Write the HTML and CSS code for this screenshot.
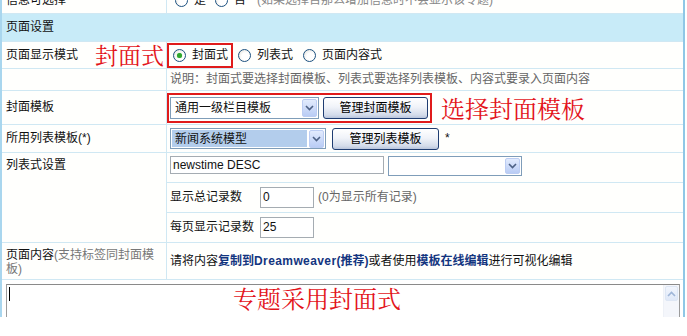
FILE: index.html
```html
<!DOCTYPE html>
<html lang="zh-CN">
<head>
<meta charset="utf-8">
<title>专题设置</title>
<link rel="stylesheet" href="styles.css">
</head>
<body>
<div class="frame">
  <div class="rows">
    <div class="row r0">
      <div class="lbl">信息可选择</div>
      <div class="val pad">
        <span class="radio"></span><span class="opt">是</span>
        <span class="radio"></span><span class="opt">否</span>
        <span class="hint">(如果选择否那么增加信息时不会显示该专题)</span>
      </div>
    </div>
    <div class="head">页面设置</div>
    <div class="row r-mode">
      <div class="lbl lbl-split"><span>页面显示模式</span><span class="anno">封面式</span></div>
      <div class="val">
        <span class="redbox rb-mode"><span class="radio on"></span><span class="opt">封面式</span></span>
        <span class="radio"></span><span class="opt">列表式</span>
        <span class="radio"></span><span class="opt">页面内容式</span>
      </div>
    </div>
    <div class="row r-note">
      <div class="lbl"></div>
      <div class="val pad note">说明：封面式要选择封面模板、列表式要选择列表模板、内容式要录入页面内容</div>
    </div>
    <div class="row r-cover">
      <div class="lbl">封面模板</div>
      <div class="val">
        <span class="redbox rb-cover">
          <span class="sel sel-cover"><span class="txt">通用一级栏目模板</span><span class="arr"><svg width="9" height="6" viewBox="0 0 9 6"><path d="M1 1 L4.5 4.5 L8 1" fill="none" stroke="#4d6185" stroke-width="1.6"/></svg></span></span>
          <span class="btn btn-cover">管理封面模板</span>
        </span>
        <span class="anno anno-cover">选择封面模板</span>
      </div>
    </div>
    <div class="row r-list">
      <div class="lbl">所用列表模板(*)</div>
      <div class="val pad">
        <span class="sel sel-list"><span class="txt hl">新闻系统模型</span><span class="arr"><svg width="9" height="6" viewBox="0 0 9 6"><path d="M1 1 L4.5 4.5 L8 1" fill="none" stroke="#4d6185" stroke-width="1.6"/></svg></span></span>
        <span class="btn btn-list">管理列表模板</span>
        <span class="star">*</span>
      </div>
    </div>
    <div class="row r-set">
      <div class="lbl lbl-top">列表式设置</div>
      <div class="sub">
        <div class="subrow s1">
          <span class="inp inp-order">newstime DESC</span>
          <span class="sel sel-order"><span class="txt"></span><span class="arr"><svg width="9" height="6" viewBox="0 0 9 6"><path d="M1 1 L4.5 4.5 L8 1" fill="none" stroke="#4d6185" stroke-width="1.6"/></svg></span></span>
        </div>
        <div class="subrow s2">
          <span class="sublbl">显示总记录数</span>
          <span class="inp inp-num">0</span>
          <span class="hint2">(0为显示所有记录)</span>
        </div>
        <div class="subrow s3">
          <span class="sublbl">每页显示记录数</span>
          <span class="inp inp-num">25</span>
        </div>
      </div>
    </div>
    <div class="row r-content">
      <div class="lbl lbl-wrap">页面内容<span class="grey">(支持标签同封面模板)</span></div>
      <div class="val pad">请将内容<b class="em">复制到<span class="lat">Dreamweaver</span>(推荐)</b>或者使用<b class="em">模板在线编辑</b>进行可视化编辑</div>
    </div>
    <div class="ta-wrap">
      <div class="ta">
        <span class="caret"></span>
        <span class="anno anno-ta">专题采用封面式</span>
        <div class="sb"><span class="sb-up"><svg width="9" height="6" viewBox="0 0 9 6"><path d="M1 5 L4.5 1.5 L8 5" fill="none" stroke="#9fb6d8" stroke-width="1.6"/></svg></span></div>
      </div>
    </div>
  </div>
</div>
</body>
</html>
```
FILE: styles.css
```css
* { box-sizing: border-box; }
body {
  margin: 0;
  background: #fff;
  font-family: "Liberation Sans", "Noto Sans CJK SC", sans-serif;
  font-size: 12px;
  line-height: 1.2;
  color: #111;
}
.frame {
  width: 685px;
  height: 317px;
  overflow: hidden;
  border-left: 2px solid #a9d6ee;
  border-right: 2px solid #8fc7e6;
}
.rows { margin-top: -13px; }
.row {
  display: grid;
  grid-template-columns: 165px 1fr;
  border-bottom: 1px solid #d0e8f3;
  background: #fffffd;
}
.lbl {
  border-right: 1px solid #d0e8f3;
  padding-left: 4px;
  display: flex;
  align-items: center;
}
.lbl-split { justify-content: space-between; padding-right: 2px; }
.lbl-top { align-items: flex-start; padding-top: 5px; }
.lbl-wrap { display: block; padding-top: 5px; padding-right: 6px; line-height: 14px; }
.grey { color: #777; }
.val { display: flex; align-items: center; }
.pad { padding-left: 3px; }
.r0 { height: 27px; }
.head {
  height: 28px;
  background: #c8ebf8;
  border-bottom: 1px solid #d0e8f3;
  display: flex;
  align-items: center;
  padding-left: 4px;
}
.r-mode { height: 27px; }
.r-note { height: 22px; }
.r-cover { height: 34px; }
.r-list { height: 28px; }
.r-content { height: 37px; }
.note { color: #666; }
.hint { color: #888; margin-left: 2px; }

.radio {
  width: 13px;
  height: 13px;
  border-radius: 50%;
  border: 1px solid #1c5180;
  background: radial-gradient(circle at 60% 60%, #fff 40%, #dcdbd3 100%);
  display: inline-block;
  flex: none;
  position: relative;
}
.radio.on::after {
  content: "";
  position: absolute;
  left: 3px; top: 3px;
  width: 5px; height: 5px;
  border-radius: 50%;
  background: #2ea52e;
  box-shadow: 0 0 1px #5bd45b;
}
.opt { margin-left: 6px; margin-right: 10px; }
.r0 .val { padding-left: 8px; padding-top: 1px; }
.r0 .opt { margin-right: 9px; }

.redbox {
  display: flex;
  align-items: center;
  border: 2px solid #e01b1b;
}
.rb-mode { height: 25px; padding-left: 4px; margin-right: 5px; }
.rb-mode .opt { margin-right: 3px; }
.rb-cover { height: 30px; width: 265px; padding-left: 1px; gap: 4px; }

.anno {
  font-family: "Noto Serif CJK SC", "Noto Sans CJK SC", serif;
  color: #e3141b;
  font-size: 23px;
  line-height: 24px;
}
.anno-cover { margin-left: 9px; font-size: 24px; }

.sel {
  display: inline-flex;
  align-items: center;
  height: 22px;
  border: 1px solid #7f9db9;
  background: #fff;
  padding: 1px;
  flex: none;
}
.sel .txt { flex: 1; padding-left: 3px; height: 100%; display: flex; align-items: center; font-family: "Noto Sans CJK SC", sans-serif; }
.sel .txt.hl { background: #b3cdec; margin-right: 2px; }
.sel .arr {
  width: 15px;
  height: 18px;
  border: 1px solid #bccdf3;
  border-radius: 2px;
  background: linear-gradient(#e2ebfd, #b9ccf5);
  display: flex;
  align-items: center;
  justify-content: center;
  flex: none;
}
.sel-cover { width: 149px; }
.sel-list { width: 156px; height: 21px; }
.sel-order { width: 134px; height: 20px; margin-left: 4px; }
.sel-order .arr { height: 16px; }

.btn {
  display: inline-flex;
  align-items: center;
  justify-content: center;
  height: 22px;
  border: 1px solid #1f3d72;
  border-radius: 3px;
  background: linear-gradient(#ffffff 0%, #f0f3f9 45%, #d3dbea 85%, #b9c5dc 100%);
  color: #000;
  flex: none;
  font-family: "Noto Sans CJK SC", sans-serif;
}
.btn-cover { width: 105px; }
.btn-list { width: 107px; margin-left: 6px; }
.star { margin-left: 6px; }

.sub { display: flex; flex-direction: column; }
.subrow {
  height: 30px;
  display: flex;
  align-items: center;
  padding-left: 3px;
  border-bottom: 1px solid #d0e8f3;
}
.subrow.s1 { align-items: flex-start; padding-top: 3px; }
.subrow.s3 { border-bottom: none; height: 29px; }
.inp {
  display: inline-flex;
  align-items: center;
  border: 1px solid #a5acb2;
  background: #fff;
  padding-left: 2px;
  flex: none;
  font-family: "Liberation Sans", sans-serif;
}
.inp-order { width: 214px; height: 18px; }
.inp-num { width: 54px; height: 21px; }
.sublbl { width: 90px; }
.hint2 { color: #666; margin-left: 4px; }

.em { color: #13357f; font-weight: bold; }
.lat { letter-spacing: 0.4px; }

.ta-wrap { padding: 4px 3px 0 4px; height: 60px; }
.ta {
  position: relative;
  height: 56px;
  border: 1px solid #9c9c9c;
  border-top-color: #8a8a8a;
  background: #fff;
  display: flex;
  justify-content: flex-end;
}
.caret {
  position: absolute;
  left: 2px; top: 2px;
  width: 1px; height: 14px;
  background: #000;
}
.anno-ta { position: absolute; left: 226px; top: 1px; font-size: 24px; }
.sb {
  width: 16px;
  background: #f4f6fb;
  border-left: 1px solid #eef1f7;
}
.sb-up {
  display: flex;
  align-items: center;
  justify-content: center;
  height: 15px;
  margin: 1px;
  border: 1px solid #dde6f4;
  border-radius: 2px;
  background: linear-gradient(#f1f5fd, #dfe8f8);
}
```
